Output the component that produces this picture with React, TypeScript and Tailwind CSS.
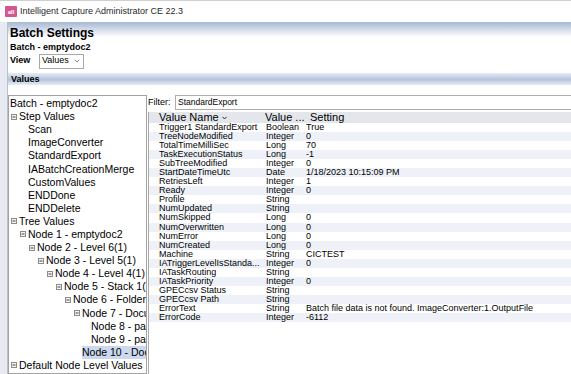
import { ChevronDown } from 'lucide-react'

// ---------------------------------------------------------------------------
// Data
// ---------------------------------------------------------------------------

type TreeItem = { label: string; level: number; exp?: boolean; sel?: boolean }

const tree: TreeItem[] = [
  { label: 'Batch - emptydoc2', level: 0 },
  { label: 'Step Values', level: 1, exp: true },
  { label: 'Scan', level: 2 },
  { label: 'ImageConverter', level: 2 },
  { label: 'StandardExport', level: 2 },
  { label: 'IABatchCreationMerge', level: 2 },
  { label: 'CustomValues', level: 2 },
  { label: 'ENDDone', level: 2 },
  { label: 'ENDDelete', level: 2 },
  { label: 'Tree Values', level: 1, exp: true },
  { label: 'Node 1 - emptydoc2', level: 2, exp: true },
  { label: 'Node 2 - Level 6(1)', level: 3, exp: true },
  { label: 'Node 3 - Level 5(1)', level: 4, exp: true },
  { label: 'Node 4 - Level 4(1)', level: 5, exp: true },
  { label: 'Node 5 - Stack 1(1)', level: 6, exp: true },
  { label: 'Node 6 - Folder(1)', level: 7, exp: true },
  { label: 'Node 7 - Document(1)', level: 8, exp: true },
  { label: 'Node 8 - page(1)', level: 9 },
  { label: 'Node 9 - page(2)', level: 9 },
  { label: 'Node 10 - Document(2)', level: 8, sel: true },
  { label: 'Default Node Level Values', level: 1, exp: true },
  { label: 'Level 8', level: 2 },
]

const rows: [string, string, string][] = [
  ['Trigger1 StandardExport', 'Boolean', 'True'],
  ['TreeNodeModified', 'Integer', '0'],
  ['TotalTimeMilliSec', 'Long', '70'],
  ['TaskExecutionStatus', 'Long', '-1'],
  ['SubTreeModified', 'Integer', '0'],
  ['StartDateTimeUtc', 'Date', '1/18/2023 10:15:09 PM'],
  ['RetriesLeft', 'Integer', '1'],
  ['Ready', 'Integer', '0'],
  ['Profile', 'String', ''],
  ['NumUpdated', 'String', ''],
  ['NumSkipped', 'Long', '0'],
  ['NumOverwritten', 'Long', '0'],
  ['NumError', 'Long', '0'],
  ['NumCreated', 'Long', '0'],
  ['Machine', 'String', 'CICTEST'],
  ['IATriggerLevelIsStanda...', 'Integer', '0'],
  ['IATaskRouting', 'String', ''],
  ['IATaskPriority', 'Integer', '0'],
  ['GPECcsv Status', 'String', ''],
  ['GPECcsv Path', 'String', ''],
  ['ErrorText', 'String', 'Batch file data is not found. ImageConverter:1.OutputFile'],
  ['ErrorCode', 'Integer', '-6112'],
]

// ---------------------------------------------------------------------------
// Pieces
// ---------------------------------------------------------------------------

function Expander() {
  return (
    <svg width="6" height="6" viewBox="0 0 6 6" className="mr-[2px] shrink-0">
      <rect x="0.5" y="0.5" width="5" height="5" fill="#f4f4f4" stroke="#8c8c8c" />
      <line x1="1.5" y1="3" x2="4.5" y2="3" stroke="#444" />
    </svg>
  )
}

function TreePanel() {
  return (
    <div className="w-[139px] shrink-0 border border-[#a3a3a3] bg-white overflow-hidden pt-[1px] text-[10.5px] text-black">
      {tree.map(t => (
        <div
          key={t.label}
          className="flex h-[13.1px] items-center whitespace-nowrap leading-[13px]"
          style={{ paddingLeft: 1 + 9 * t.level - (t.exp ? 8 : 0) }}
        >
          {t.exp && <Expander />}
          <span className={t.sel ? 'bg-[#cad9ee] pr-2' : ''}>{t.label}</span>
        </div>
      ))}
    </div>
  )
}

function Grid() {
  return (
    <div className="flex-1 ml-[1px] mt-[2px] border-l border-[#a9a9a9] text-black">
      <div className="flex h-[11px] items-center bg-[#e3e6eb] pl-[10px] text-[11px] leading-[11px] whitespace-nowrap">
        <span className="w-[106px] flex items-center gap-[3px]">
          Value Name
          <svg width="5" height="4" viewBox="0 0 5 4"><path d="M0.5 0.8 L2.5 3 L4.5 0.8" fill="none" stroke="#333" /></svg>
        </span>
        <span className="w-[45px]">Value ...</span>
        <span>Setting</span>
      </div>
      {rows.map(([name, type, val], i) => (
        <div
          key={name}
          className={`flex h-[9.05px] overflow-hidden pl-[10px] text-[9px] leading-[9px] whitespace-nowrap ${i % 2 ? 'bg-[#eef2f8]' : 'bg-white'}`}
        >
          <span className="w-[107px]">{name}</span>
          <span className="w-[40px]">{type}</span>
          <span>{val}</span>
        </div>
      ))}
    </div>
  )
}

// ---------------------------------------------------------------------------
// Page
// ---------------------------------------------------------------------------

export default function App() {
  return (
    <div className="w-[571px] h-[374px] overflow-hidden bg-white font-['Liberation_Sans',Arial,sans-serif]">
      {/* title bar */}
      <div className="h-[22px] border-t border-[#cfcfcf] flex items-center pl-[5px] gap-[3px]">
        <span className="w-[12px] h-[11px] bg-[#d4558f] rounded-[1px] flex items-center justify-center text-white text-[6px] font-bold leading-none">
          aII
        </span>
        <span className="text-[9px] text-[#2a2a2a]">Intelligent Capture Administrator CE 22.3</span>
      </div>

      <div className="flex h-[352px]">
        <div className="w-[8px] shrink-0 bg-[#e7ebf1] border-r border-[#b7c1ce]" />

        <div className="flex-1 flex flex-col min-w-0">
          <div className="h-[19px] bg-[linear-gradient(to_bottom,#a6b8d3,#ffffff_15px)] pl-[2px] pt-[4px] text-[12px] font-bold leading-[14px] text-black">
            Batch Settings
          </div>
          <div className="h-[12px] pl-[2px] text-[9px] font-bold leading-[12px] text-black">Batch - emptydoc2</div>
          <div className="h-[16px] flex items-center pl-[2px]">
            <span className="w-[29px] text-[9px] font-bold text-black">View</span>
            <div className="w-[45px] h-[15px] border border-[#a8a8a8] flex items-center justify-between pl-[2px] pr-[2px] text-[9px] text-black">
              Values
              <ChevronDown className="w-[8px] h-[8px] text-[#444]" strokeWidth={2} />
            </div>
          </div>
          <div className="h-[4px]" />
          <div className="h-[12px] bg-[linear-gradient(to_bottom,#e6ecf4,#b3c3db_55%,#e9eef5)] pl-[3px] text-[9px] font-bold leading-[12px] text-black">
            Values
          </div>
          <div className="h-[10px]" />

          <div className="flex flex-1 min-h-0">
            <TreePanel />
            <div className="flex-1 flex flex-col min-w-0">
              <div className="h-[15px] flex items-center">
                <span className="w-[28px] pl-[1px] text-[9px] text-black">Filter:</span>
                <div className="flex-1 h-[15px] border border-r-0 border-[#acacac] pl-[2px] text-[8.5px] leading-[13px] text-black">
                  StandardExport
                </div>
              </div>
              <Grid />
            </div>
          </div>
        </div>
      </div>
    </div>
  )
}
